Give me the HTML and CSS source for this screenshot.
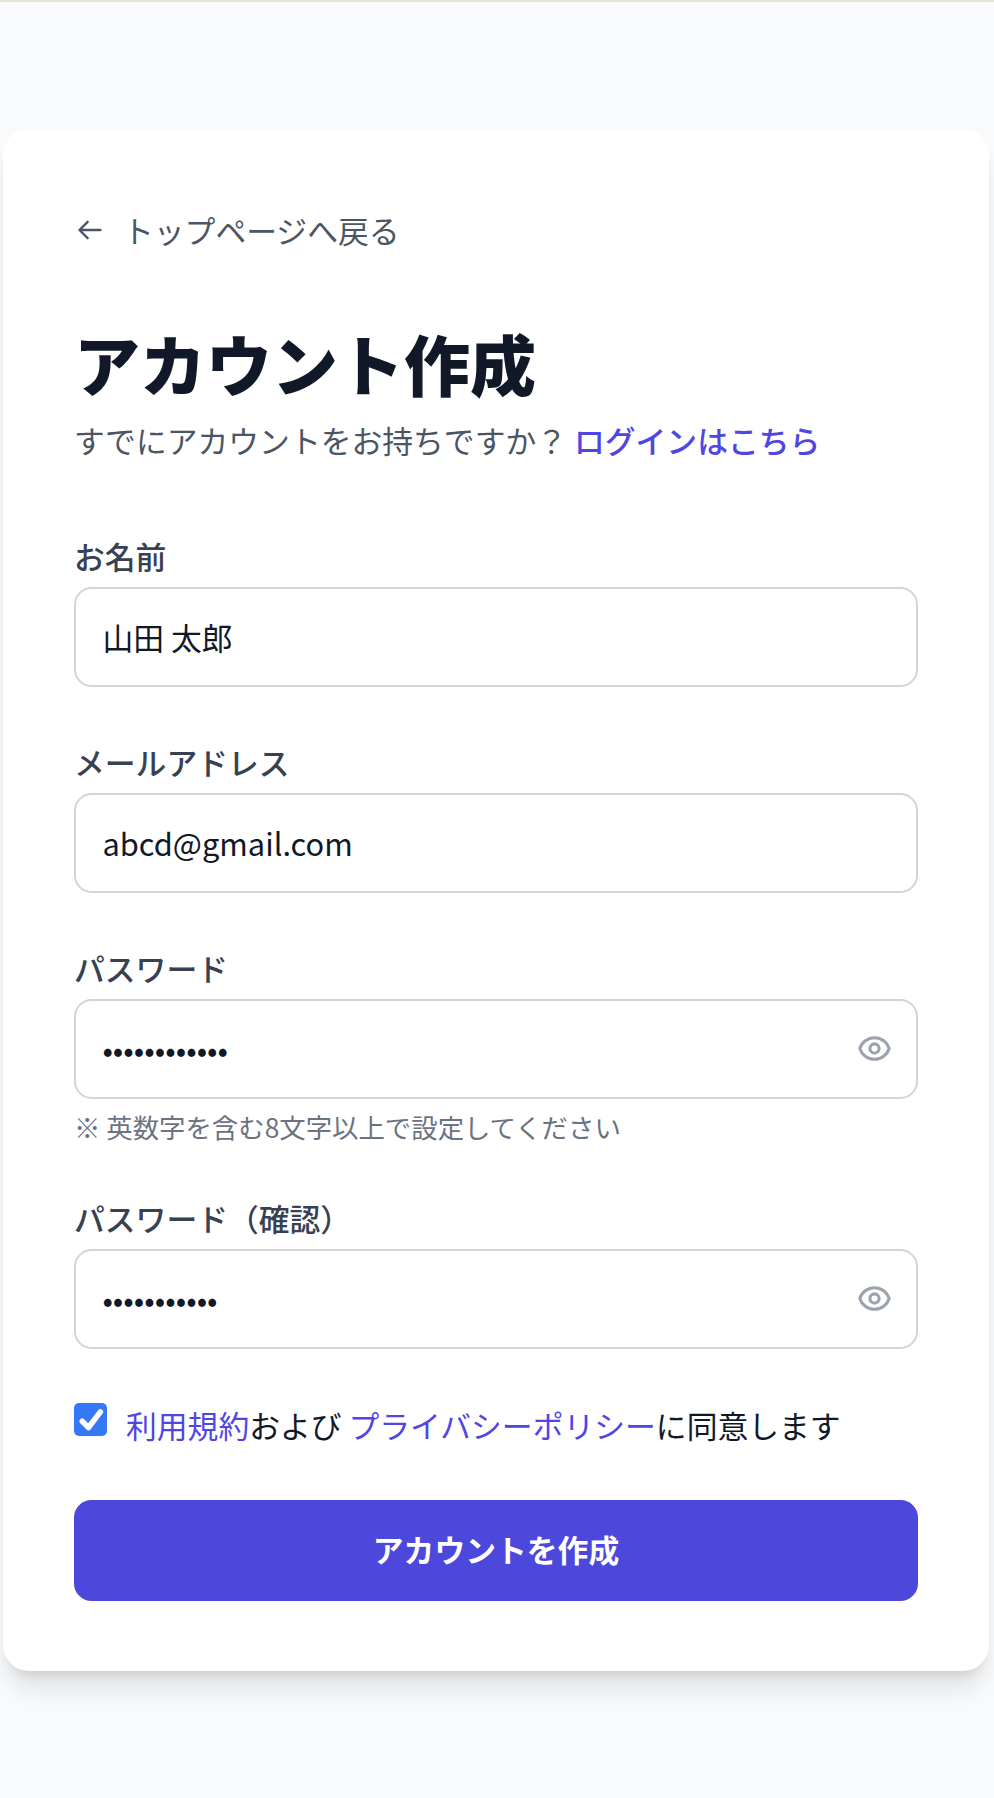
FILE: index.html
```html
<!DOCTYPE html>
<html lang="ja">
<head>
  <title>アカウント作成</title>
  <link rel="stylesheet" href="styles.css">
</head>
<body>
  <div class="card">
    <a class="back-link" href="#">
      <svg class="back-icon" viewBox="0 0 24 24" fill="none" stroke="currentColor" stroke-width="2" stroke-linecap="round" stroke-linejoin="round"><path d="M10 19l-7-7m0 0l7-7m-7 7h18"/></svg>
      <span>トップページへ戻る</span>
    </a>

    <h1>アカウント作成</h1>
    <p class="sub">すでにアカウントをお持ちですか？ <a href="#">ログインはこちら</a></p>

    <form class="form">
      <div class="form-group">
        <label for="name">お名前</label>
        <input type="text" id="name" value="山田 太郎">
      </div>

      <div class="form-group">
        <label for="email">メールアドレス</label>
        <input type="email" id="email" value="abcd@gmail.com">
      </div>

      <div class="form-group">
        <label for="password">パスワード</label>
        <div class="input-wrap">
          <input type="password" id="password" value="password1234">
          <svg class="eye" viewBox="0 0 24 24" fill="none" stroke="currentColor" stroke-width="2" stroke-linecap="round" stroke-linejoin="round"><path d="M15 12a3 3 0 11-6 0 3 3 0 016 0z"/><path d="M2.458 12C3.732 7.943 7.523 5 12 5c4.478 0 8.268 2.943 9.542 7-1.274 4.057-5.064 7-9.542 7-4.477 0-8.268-2.943-9.542-7z"/></svg>
        </div>
        <div class="hint">※ 英数字を含む8文字以上で設定してください</div>
      </div>

      <div class="form-group">
        <label for="confirm">パスワード（確認）</label>
        <div class="input-wrap">
          <input type="password" id="confirm" value="password123">
          <svg class="eye" viewBox="0 0 24 24" fill="none" stroke="currentColor" stroke-width="2" stroke-linecap="round" stroke-linejoin="round"><path d="M15 12a3 3 0 11-6 0 3 3 0 016 0z"/><path d="M2.458 12C3.732 7.943 7.523 5 12 5c4.478 0 8.268 2.943 9.542 7-1.274 4.057-5.064 7-9.542 7-4.477 0-8.268-2.943-9.542-7z"/></svg>
        </div>
      </div>

      <div class="terms">
        <span class="checkbox">
          <svg viewBox="0 0 24 24" fill="none" stroke="#fff" stroke-width="4.4" stroke-linecap="round" stroke-linejoin="round"><path d="M5 13l5 5L19.500 5.500"/></svg>
        </span>
        <span class="terms-text"><a href="#">利用規約</a>および <a href="#">プライバシーポリシー</a>に同意します</span>
      </div>

      <button type="button" class="submit">アカウントを作成</button>
    </form>
  </div>
</body>
</html>
```

FILE: styles.css
```css
* {
  box-sizing: border-box;
}
body {
  margin: 0;
  padding: 127px 5px 0 3px;
  min-height: 1798px;
  background: #f9fafb;
  border-top: 2px solid #e9e3d3;
  font-family: "Noto Sans CJK JP", "Noto Sans", sans-serif;
  color: #111827;
}
a {
  color: #4f46e5;
  text-decoration: none;
}
.card {
  background: #fff;
  border-radius: 26px;
  padding: 72px 71px 70px 71px;
  box-shadow: 0 22px 27px -5px rgba(0,0,0,0.1), 0 9px 11px -6px rgba(0,0,0,0.1);
}
.back-link {
  display: flex;
  align-items: center;
  height: 56px;
  color: #4b5563;
  font-size: 30.8px;
}
.back-icon {
  width: 28px;
  height: 28px;
  margin: 1px 19px 0 2px;
}
h1 {
  margin: 65px 0 0;
  font-size: 66px;
  line-height: 80px;
  font-weight: 900;
  color: #111827;
}
.sub {
  margin: 16px 0 0;
  font-size: 30.8px;
  line-height: 44px;
  color: #4b5563;
}
.sub a {
  font-weight: 500;
}
.form {
  margin-top: 75px;
}
.form-group {
  margin-bottom: 56px;
}
.form-group label {
  display: block;
  margin-bottom: 12px;
  font-size: 30.8px;
  line-height: 38px;
  font-weight: 500;
  color: #374151;
}
.form-group input {
  display: block;
  width: 100%;
  height: 100px;
  padding: 0 26.4px 2px;
  border: 2px solid #d1d5db;
  border-radius: 17.6px;
  font-family: inherit;
  font-size: 30.8px;
  color: #111827;
  background: #fff;
}
.input-wrap {
  position: relative;
}
.eye {
  position: absolute;
  top: 31px;
  right: 25px;
  width: 37px;
  height: 37px;
  color: #9ca3af;
}
.hint {
  margin-top: 12px;
  margin-bottom: 1px;
  font-size: 26.4px;
  line-height: 32px;
  color: #6b7280;
}
.terms {
  display: flex;
  align-items: flex-start;
  margin-top: -2px;
}
.checkbox {
  flex: none;
  width: 33px;
  height: 33px;
  border-radius: 5px;
  background: #3478f6;
  padding: 1.5px;
}
.checkbox svg {
  display: block;
}
.terms-text {
  margin-left: 19px;
  font-size: 30.8px;
  line-height: 44px;
  color: #111827;
}
.submit {
  display: block;
  width: 100%;
  height: 101px;
  margin-top: 53px;
  padding: 0 0 4px;
  border: none;
  border-radius: 17.6px;
  background: #4d48dc;
  color: #fff;
  font-family: inherit;
  font-size: 30.8px;
  font-weight: 700;
}
```
